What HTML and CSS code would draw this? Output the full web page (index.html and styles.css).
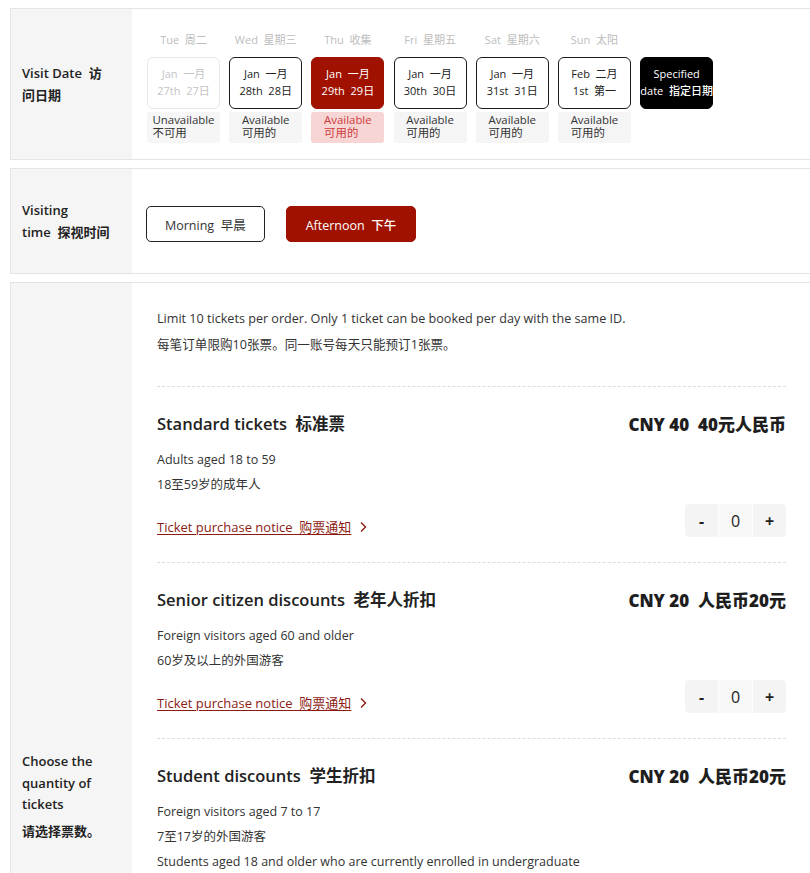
FILE: index.html
```html
<!DOCTYPE html>
<html lang="en">
<head>
<meta charset="utf-8">
<title>Tickets</title>
<link rel="stylesheet" href="styles.css">
</head>
<body>
<section class="panel">
  <div class="label"><p>Visit Date&nbsp;&nbsp;访问日期</p></div>
  <div class="dates">
    <div class="day unavailable">
      <div class="dow">Tue&nbsp;&nbsp;周二</div>
      <div class="box"><span>Jan&nbsp;&nbsp;一月</span><span>27th&nbsp;&nbsp;27日</span></div>
      <div class="status"><div>Unavailable<br>不可用</div></div>
    </div>
    <div class="day">
      <div class="dow">Wed&nbsp;&nbsp;星期三</div>
      <div class="box"><span>Jan&nbsp;&nbsp;一月</span><span>28th&nbsp;&nbsp;28日</span></div>
      <div class="status"><div>Available<br>可用的</div></div>
    </div>
    <div class="day selected">
      <div class="dow">Thu&nbsp;&nbsp;收集</div>
      <div class="box"><span>Jan&nbsp;&nbsp;一月</span><span>29th&nbsp;&nbsp;29日</span></div>
      <div class="status"><div>Available<br>可用的</div></div>
    </div>
    <div class="day">
      <div class="dow">Fri&nbsp;&nbsp;星期五</div>
      <div class="box"><span>Jan&nbsp;&nbsp;一月</span><span>30th&nbsp;&nbsp;30日</span></div>
      <div class="status"><div>Available<br>可用的</div></div>
    </div>
    <div class="day">
      <div class="dow">Sat&nbsp;&nbsp;星期六</div>
      <div class="box"><span>Jan&nbsp;&nbsp;一月</span><span>31st&nbsp;&nbsp;31日</span></div>
      <div class="status"><div>Available<br>可用的</div></div>
    </div>
    <div class="day">
      <div class="dow">Sun&nbsp;&nbsp;太阳</div>
      <div class="box"><span>Feb&nbsp;&nbsp;二月</span><span>1st&nbsp;&nbsp;第一</span></div>
      <div class="status"><div>Available<br>可用的</div></div>
    </div>
    <div class="day special">
      <div class="dow">&nbsp;</div>
      <div class="box"><span>Specified</span><span>date&nbsp;&nbsp;指定日期</span></div>
    </div>
  </div>
</section>

<section class="panel">
  <div class="label"><p>Visiting time&nbsp;&nbsp;探视时间</p></div>
  <div class="times">
    <button class="time-btn">Morning&nbsp;&nbsp;早晨</button>
    <button class="time-btn active">Afternoon&nbsp;&nbsp;下午</button>
  </div>
</section>

<section class="panel panel-tickets">
  <div class="label label-tickets">
    <p>Choose the quantity of tickets</p>
    <p class="cn">请选择票数。</p>
  </div>
  <div class="tickets">
    <div class="intro">
      <p>Limit 10 tickets per order. Only 1 ticket can be booked per day with the same ID.</p>
      <p>每笔订单限购10张票。同一账号每天只能预订1张票。</p>
    </div>

    <div class="ticket">
      <div class="ticket-head">
        <h3>Standard tickets&nbsp;&nbsp;标准票</h3>
        <div class="price">CNY 40&nbsp;&nbsp;40元人民币</div>
      </div>
      <p class="desc">Adults aged 18 to 59</p>
      <p class="desc">18至59岁的成年人</p>
      <div class="ticket-foot">
        <a class="notice" href="#">Ticket purchase notice&nbsp;&nbsp;购票通知</a>
        <svg class="chev" width="8" height="12" viewBox="0 0 8 12"><polyline points="2,1.5 6.5,6 2,10.5" fill="none" stroke="#8c1c13" stroke-width="1.4"/></svg>
        <div class="counter"><span class="op">-</span><span class="num">0</span><span class="op">+</span></div>
      </div>
    </div>

    <div class="ticket">
      <div class="ticket-head">
        <h3>Senior citizen discounts&nbsp;&nbsp;老年人折扣</h3>
        <div class="price">CNY 20&nbsp;&nbsp;人民币20元</div>
      </div>
      <p class="desc">Foreign visitors aged 60 and older</p>
      <p class="desc">60岁及以上的外国游客</p>
      <div class="ticket-foot">
        <a class="notice" href="#">Ticket purchase notice&nbsp;&nbsp;购票通知</a>
        <svg class="chev" width="8" height="12" viewBox="0 0 8 12"><polyline points="2,1.5 6.5,6 2,10.5" fill="none" stroke="#8c1c13" stroke-width="1.4"/></svg>
        <div class="counter"><span class="op">-</span><span class="num">0</span><span class="op">+</span></div>
      </div>
    </div>

    <div class="ticket">
      <div class="ticket-head">
        <h3>Student discounts&nbsp;&nbsp;学生折扣</h3>
        <div class="price">CNY 20&nbsp;&nbsp;人民币20元</div>
      </div>
      <p class="desc">Foreign visitors aged 7 to 17</p>
      <p class="desc">7至17岁的外国游客</p>
      <p class="desc">Students aged 18 and older who are currently enrolled in undergraduate</p>
      <p class="desc">or lower full-time programs, with a valid student ID</p>
      <p class="desc">18岁及以上正在接受本科及以下学历教育的学生</p>
      <div class="ticket-foot">
        <a class="notice" href="#">Ticket purchase notice&nbsp;&nbsp;购票通知</a>
        <svg class="chev" width="8" height="12" viewBox="0 0 8 12"><polyline points="2,1.5 6.5,6 2,10.5" fill="none" stroke="#8c1c13" stroke-width="1.4"/></svg>
        <div class="counter"><span class="op">-</span><span class="num">0</span><span class="op">+</span></div>
      </div>
    </div>
  </div>
</section>
</body>
</html>
```

FILE: styles.css
```css
* { box-sizing: border-box; }
html { overflow-x: hidden; scrollbar-width: none; }
html::-webkit-scrollbar { display: none; }
body {
  margin: 0;
  padding: 8px 0 0 10px;
  font-family: "Open Sans", "Noto Sans CJK SC", sans-serif;
  color: #222;
  background: #fff;
}
p { margin: 0; }

.panel {
  display: flex;
  width: 801px;
  border: 1px solid #e4e4e4;
  margin-bottom: 8px;
}
.label {
  flex: none;
  width: 121px;
  background: #f5f5f5;
  padding: 0 18px 0 11px;
  display: flex;
  flex-direction: column;
  justify-content: center;
  font-size: 13px;
  font-weight: 600;
  line-height: 22px;
  color: #222;
}

/* dates */
.dates {
  display: flex;
  gap: 9.2px;
  padding: 23px 0 16px 15px;
}
.day { width: 73px; display: flex; flex-direction: column; }
.dow {
  height: 16px;
  line-height: 16px;
  font-size: 11px;
  color: #bdbdbd;
  text-align: center;
  white-space: nowrap;
}
.box {
  margin-top: 9px;
  height: 52px;
  border: 1px solid #1a1a1a;
  border-radius: 6px;
  display: flex;
  flex-direction: column;
  align-items: center;
  padding-top: 7px;
  font-size: 11px;
  line-height: 17px;
  color: #222;
  white-space: nowrap;
}
.status {
  margin-top: 3px;
  height: 31px;
  background: #f5f5f5;
  border-radius: 3px;
  display: flex;
  justify-content: center;
  padding-top: 2px;
  font-size: 11.4px;
  line-height: 12.5px;
  color: #333;
}
.status div { white-space: nowrap; }
.unavailable .box { border-color: #e8e8e8; color: #c4c4c4; }
.unavailable .status { background: #f6f6f6; }
.selected .box { background: #a11100; border-color: #a11100; color: #fff; }
.selected .status { background: #f7d5d5; color: #cf3b3b; }
.special .box { background: #000; border-color: #000; color: #fff; font-weight: 500; }

/* times */
.times {
  display: flex;
  align-items: flex-start;
  gap: 21px;
  padding: 37px 0 0 14px;
  height: 104px;
}
.time-btn {
  height: 36px;
  padding: 0 18px;
  border: 1px solid #222;
  border-radius: 5px;
  background: #fff;
  font-family: inherit;
  font-size: 12.5px;
  color: #333;
}
.time-btn.active {
  background: #a11100;
  border-color: #a11100;
  color: #fff;
  font-weight: 500;
  padding: 0 19px;
}

/* tickets */
.label-tickets { line-height: 21.5px; }
.label-tickets .cn { margin-top: 5px; }
.tickets {
  flex: 1;
  padding: 0 24px 321px 25px;
}
.intro {
  padding: 26px 0 31px;
  font-size: 12.6px;
  line-height: 20px;
  color: #333;
}
.intro p + p { margin-top: 6px; }
.ticket {
  border-top: 1px dashed #dcdcdc;
  padding: 24px 0 25px;
}
.ticket-head {
  display: flex;
  justify-content: space-between;
  align-items: center;
  height: 24px;
}
.ticket-head h3 {
  margin: 0;
  font-size: 16.5px;
  font-weight: 600;
  color: #222;
}
.price {
  font-size: 17px;
  font-weight: 800;
  color: #1e1e1e;
}
.desc {
  font-size: 12.5px;
  line-height: 20px;
  color: #333;
  margin-top: 5px;
}
.ticket-head + .desc { margin-top: 15px; }
.ticket-foot {
  display: flex;
  align-items: flex-end;
  margin-top: 9px;
}
.notice {
  font-size: 13px;
  line-height: 20px;
  color: #8c1c13;
  text-decoration: underline;
  text-underline-offset: 2px;
}
.chev { margin: 0 0 4px 8px; }
.counter {
  margin-left: auto;
  display: flex;
  gap: 1px;
  height: 33px;
  border-radius: 4px;
  overflow: hidden;
}
.counter span {
  width: 33px;
  display: flex;
  align-items: center;
  justify-content: center;
  background: #f4f4f4;
  font-size: 16px;
  color: #222;
}
.counter .op { font-weight: 700; }
.counter .num { background: #f8f8f8; font-weight: 400; }
```
